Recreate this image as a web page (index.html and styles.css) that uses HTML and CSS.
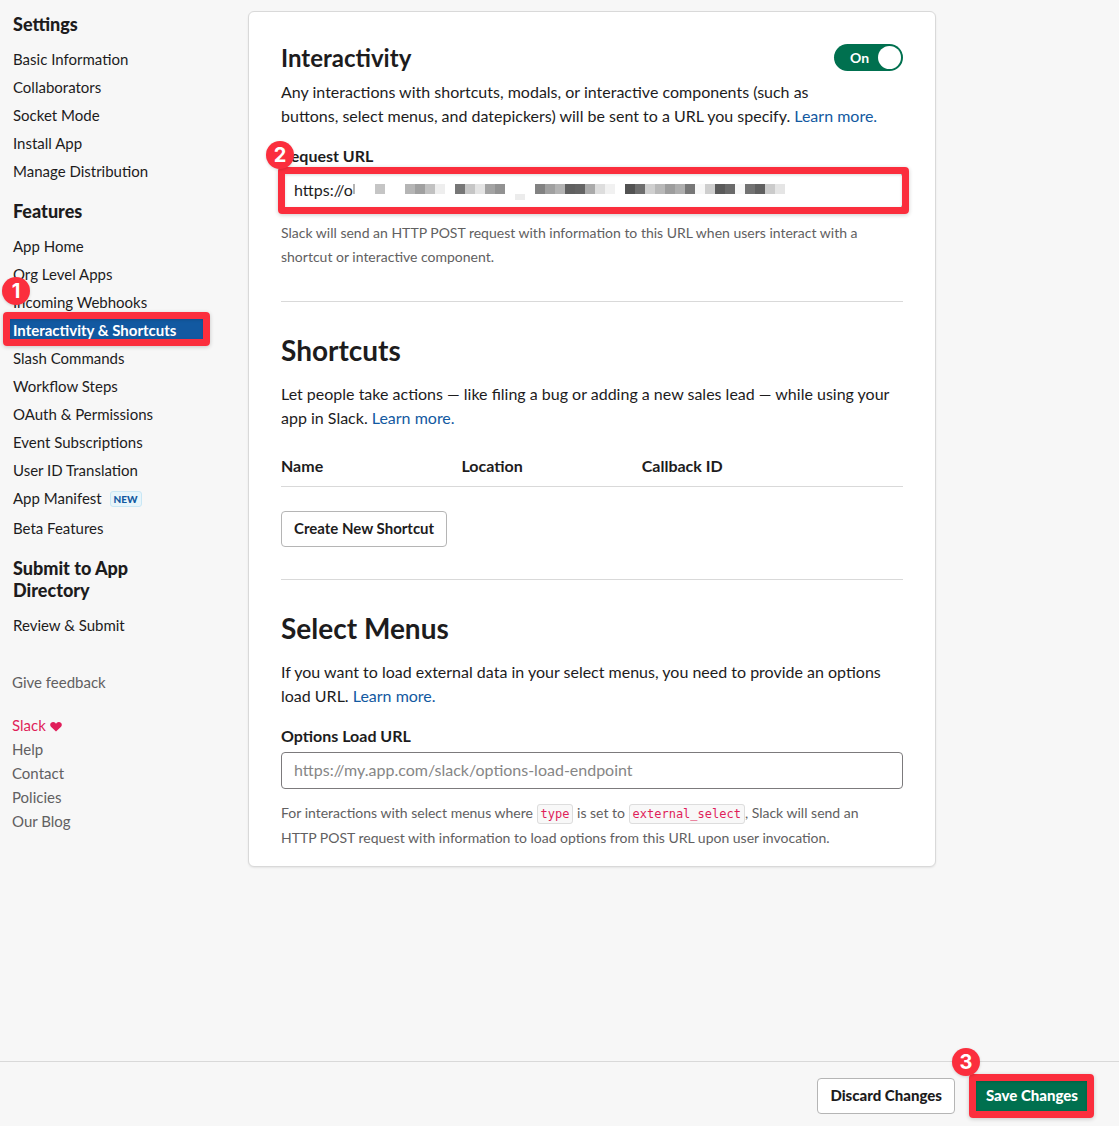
FILE: index.html
```html
<!DOCTYPE html>
<html lang="en">
<head>
  <meta charset="UTF-8">
  <meta name="viewport" content="width=device-width, initial-scale=1.0">
  <title>Interactivity &amp; Shortcuts</title>
  <link rel="stylesheet" href="styles.css">
</head>
<body>
  <div class="page">
    <nav class="sidebar">
      <h4>Settings</h4>
      <ul class="nav-list">
        <li><a href="#">Basic Information</a></li>
        <li><a href="#">Collaborators</a></li>
        <li><a href="#">Socket Mode</a></li>
        <li><a href="#">Install App</a></li>
        <li><a href="#">Manage Distribution</a></li>
      </ul>

      <h4>Features</h4>
      <ul class="nav-list">
        <li><a href="#">App Home</a></li>
        <li><a href="#">Org Level Apps</a></li>
        <li><a href="#">Incoming Webhooks</a></li>
        <li class="callout">
          <a href="#" class="active">Interactivity &amp; Shortcuts</a>
          <span class="frame frame-nav"></span>
          <span class="step step-nav">1</span>
        </li>
        <li><a href="#">Slash Commands</a></li>
        <li><a href="#">Workflow Steps</a></li>
        <li><a href="#">OAuth &amp; Permissions</a></li>
        <li><a href="#">Event Subscriptions</a></li>
        <li><a href="#">User ID Translation</a></li>
        <li class="with-tag"><a href="#">App Manifest <span class="tag">NEW</span></a></li>
        <li><a href="#">Beta Features</a></li>
      </ul>

      <h4>Submit to App Directory</h4>
      <ul class="nav-list">
        <li><a href="#">Review &amp; Submit</a></li>
      </ul>

      <ul class="footer-links feedback">
        <li><a href="#">Give feedback</a></li>
      </ul>
      <ul class="footer-links">
        <li><a href="#" class="slack-love">Slack
          <svg class="heart" viewBox="0 0 12 11" width="12" height="11"><path d="M6 10.500 1.200 6C-.1 4.800-.1 2.900.9 1.900 2 .7 4.200.6 5.200 1.800L6 2.700l.8-.9C7.800.6 10 .7 11.100 1.900c1 1 1 2.900-.3 4.100z" fill="currentColor"/></svg></a></li>
        <li><a href="#">Help</a></li>
        <li><a href="#">Contact</a></li>
        <li><a href="#">Policies</a></li>
        <li><a href="#">Our Blog</a></li>
      </ul>
    </nav>

    <main class="card">
      <section>
        <label class="toggle">
          <input type="checkbox" aria-label="Interactivity" checked>
          <span class="toggle-text">On</span>
          <span class="toggle-knob"></span>
        </label>
        <h2>Interactivity</h2>
        <p>Any interactions with shortcuts, modals, or interactive components (such as buttons, select menus, and datepickers) will be sent to a URL you specify. <a href="#">Learn more.</a></p>

        <label class="field-label" for="request-url">Request URL</label>
        <div class="callout">
          <input type="text" class="field" id="request-url" value="https://o">
          <!-- redacted part of the URL -->
          <svg class="redacted" viewBox="0 0 432 16" width="432" height="16" shape-rendering="crispEdges">
            <rect x="0" width="2" height="10" fill="#b4b4b4"/>
            <rect x="22" width="10" height="10" fill="#c5c5c5"/>
            <rect x="52" width="10" height="10" fill="#b5b5b5"/>
            <rect x="62" width="10" height="10" fill="#a0a0a0"/>
            <rect x="72" width="10" height="10" fill="#c1c1c1"/>
            <rect x="82" width="10" height="10" fill="#eeeeee"/>
            <rect x="102" width="10" height="10" fill="#777777"/>
            <rect x="112" width="10" height="10" fill="#c6c6c6"/>
            <rect x="122" width="10" height="10" fill="#e4e4e4"/>
            <rect x="132" width="10" height="10" fill="#a3a3a3"/>
            <rect x="142" width="10" height="10" fill="#929292"/>
            <rect x="162" y="10" width="10" height="6" fill="#ececec"/>
            <rect x="182" width="10" height="10" fill="#828282"/>
            <rect x="192" width="10" height="10" fill="#a0a0a0"/>
            <rect x="202" width="10" height="10" fill="#b3b3b3"/>
            <rect x="212" width="10" height="10" fill="#606060"/>
            <rect x="222" width="10" height="10" fill="#646464"/>
            <rect x="232" width="10" height="10" fill="#aaaaaa"/>
            <rect x="242" width="10" height="10" fill="#dddddd"/>
            <rect x="252" width="10" height="10" fill="#f1f1f1"/>
            <rect x="272" width="10" height="10" fill="#525252"/>
            <rect x="282" width="10" height="10" fill="#6e6e6e"/>
            <rect x="292" width="10" height="10" fill="#cfcfcf"/>
            <rect x="302" width="10" height="10" fill="#b8b8b8"/>
            <rect x="312" width="10" height="10" fill="#9d9d9d"/>
            <rect x="322" width="10" height="10" fill="#aeaeae"/>
            <rect x="332" width="10" height="10" fill="#777777"/>
            <rect x="342" width="10" height="10" fill="#f7f7f7"/>
            <rect x="352" width="10" height="10" fill="#cecece"/>
            <rect x="362" width="10" height="10" fill="#5a5a5a"/>
            <rect x="372" width="10" height="10" fill="#6a6a6a"/>
            <rect x="382" width="10" height="10" fill="#f7f7f7"/>
            <rect x="392" width="10" height="10" fill="#727272"/>
            <rect x="402" width="10" height="10" fill="#606060"/>
            <rect x="412" width="10" height="10" fill="#cbcbcb"/>
            <rect x="422" width="10" height="10" fill="#e5e5e5"/>
          </svg>
          <span class="frame frame-field"></span>
          <span class="step step-field">2</span>
        </div>
        <p class="hint">Slack will send an HTTP POST request with information to this URL when users interact with a shortcut or interactive component.</p>
      </section>

      <section>
        <h1>Shortcuts</h1>
        <p>Let people take actions — like filing a bug or adding a new sales lead — while using your app in Slack. <a href="#">Learn more.</a></p>
        <table class="shortcuts">
          <thead>
            <tr>
              <th>Name</th>
              <th>Location</th>
              <th class="col-callback">Callback ID</th>
            </tr>
          </thead>
        </table>
        <button type="button" class="btn">Create New Shortcut</button>
      </section>

      <section>
        <h1>Select Menus</h1>
        <p>If you want to load external data in your select menus, you need to provide an options load URL. <a href="#">Learn more.</a></p>
        <label class="field-label" for="options-url">Options Load URL</label>
        <input type="text" class="field" id="options-url" placeholder="https://my.app.com/slack/options-load-endpoint">
        <p class="hint">For interactions with select menus where <code>type</code> is set to <code>external_select</code>, Slack will send an HTTP POST request with information to load options from this URL upon user invocation.</p>
      </section>
    </main>
  </div>

  <footer class="action-bar">
    <button type="button" class="btn">Discard Changes</button>
    <div class="callout">
      <button type="button" class="btn btn-primary">Save Changes</button>
      <span class="frame frame-save"></span>
      <span class="step step-save">3</span>
    </div>
  </footer>
</body>
</html>
```
FILE: styles.css
```css
* {
  box-sizing: border-box;
}

body {
  display: flex;
  flex-direction: column;
  min-height: 100vh;
  margin: 0;
  font-family: Lato, "Liberation Sans", sans-serif;
  font-size: 16px;
  line-height: 24px;
  color: #1d1c1d;
  background-color: #f7f7f7;
}

h1, h2, h4, p, ul {
  margin: 0;
}

ul {
  padding: 0;
  list-style: none;
}

a {
  color: #1259a1;
  text-decoration: none;
}

.page {
  flex: 1;
  display: flex;
  align-items: flex-start;
  gap: 40px;
}

/* Sidebar */
.sidebar {
  flex: 0 0 208px;
  padding-top: 13px;
  font-size: 15px;
}

.sidebar h4 {
  padding: 0 60px 0 13px;
  margin-bottom: 10px;
  font-size: 18px;
  font-weight: 900;
  line-height: 22px;
}

.nav-list {
  margin-bottom: 15px;
}

.nav-list a {
  display: block;
  padding-left: 13px;
  line-height: 28px;
  color: #1d1c1d;
}

.nav-list .active {
  margin: 0 4px;
  padding-left: 9px;
  font-weight: 700;
  color: #fff;
  background-color: #1259a1;
}

.with-tag {
  padding-bottom: 2px;
}

.tag {
  display: inline-block;
  margin-left: 4px;
  padding: 0 3px;
  border: 1px solid #c9e7f5;
  border-radius: 3px;
  font-size: 10px;
  font-weight: 900;
  line-height: 14px;
  vertical-align: 1px;
  color: #1259a1;
  background-color: #e8f5fa;
}

.footer-links {
  padding-left: 12px;
}

.footer-links a {
  color: #616061;
}

.feedback {
  margin: 31px 0 19px;
}

.footer-links .slack-love {
  color: #e01e5a;
}

.heart {
  vertical-align: -1px;
}

/* Content card */
.card {
  flex: 0 1 688px;
  margin: 11px 16px 32px 0;
  padding: 32px 32px 16px;
  border: 1px solid #d9d9d9;
  border-radius: 6px;
  background-color: #fff;
  box-shadow: 0 1px 2px rgba(0, 0, 0, 0.08);
}

.card section + section {
  margin-top: 32px;
  padding-top: 32px;
  border-top: 1px solid #d9d9d9;
}

h1 {
  margin-bottom: 16px;
  font-size: 28px;
  line-height: 32px;
}

h2 {
  margin-bottom: 8px;
  font-size: 24px;
  line-height: 28px;
}

.toggle {
  float: right;
  display: flex;
  align-items: center;
  justify-content: space-between;
  width: 69px;
  height: 27px;
  margin: 0 0 16px 16px;
  padding: 0 2px 0 16px;
  border-radius: 14px;
  font-size: 14px;
  font-weight: 700;
  color: #fff;
  background-color: #00704f;
  cursor: pointer;
}

.toggle input {
  position: absolute;
  opacity: 0;
}

.toggle-knob {
  width: 23px;
  height: 23px;
  border-radius: 50%;
  background-color: #fff;
}

.field-label {
  display: block;
  margin: 16px 0 4px;
  font-weight: 700;
}

.field {
  display: block;
  width: 100%;
  height: 37px;
  padding: 0 12px 2px;
  border: 1px solid #7c7a7c;
  border-radius: 4px;
  font: inherit;
  color: #1d1c1d;
  background-color: #fff;
}

.field::placeholder {
  color: #868686;
}

.hint {
  margin-top: 12px;
  padding-right: 16px;
  font-size: 14px;
  color: #616061;
}

.hint code {
  padding: 2px 3px;
  border: 1px solid #dddddd;
  border-radius: 3px;
  font-family: "DejaVu Sans Mono", monospace;
  font-size: 12px;
  color: #e01e5a;
  background-color: #f8f8f8;
}

.shortcuts {
  width: 100%;
  margin: 24px 0;
  border-collapse: collapse;
  table-layout: fixed;
}

.shortcuts th {
  width: 29%;
  padding: 0 0 8px;
  border-bottom: 1px solid #d9d9d9;
  text-align: left;
}

.shortcuts .col-callback {
  width: 42%;
}

.btn {
  display: block;
  height: 36px;
  padding: 0 12px 2px;
  border: 1px solid #b5b5b5;
  border-radius: 4px;
  font: inherit;
  font-size: 15px;
  font-weight: 700;
  color: #1d1c1d;
  background-color: #fff;
  cursor: pointer;
}

.btn-primary {
  border-color: #00704f;
  color: #fff;
  background-color: #00704f;
}

/* Bottom bar */
.action-bar {
  display: flex;
  justify-content: flex-end;
  gap: 18px;
  padding: 16px 28px 12px;
  border-top: 1px solid #d9d9d9;
}

.action-bar .btn {
  font-weight: 900;
}

/* Numbered walkthrough callouts */
.callout {
  position: relative;
}

.frame {
  position: absolute;
  border: 7px solid #fb2e3d;
  border-radius: 4px;
  box-shadow: 0 1px 4px rgba(0, 0, 0, 0.2), inset 0 1px 3px rgba(0, 0, 0, 0.15);
  pointer-events: none;
}

.frame-nav {
  inset: -4px -2px -2px 3px;
}

.frame-field {
  inset: -5px -6px -5px -3px;
}

.frame-save {
  inset: -4px -3px -4px -4px;
}

.step {
  position: absolute;
  z-index: 1;
  width: 28px;
  height: 28px;
  border-radius: 50%;
  font-family: Inter, sans-serif;
  font-size: 20px;
  font-weight: 700;
  line-height: 28px;
  text-align: center;
  color: #fff;
  background-color: #fb2e3d;
  box-shadow: 0 1px 3px rgba(0, 0, 0, 0.15);
}

.step-nav {
  top: -39px;
  left: 2px;
}

.step-field {
  top: -31px;
  left: -15px;
}

.step-save {
  top: -30px;
  left: -21px;
}

.redacted {
  position: absolute;
  top: 12px;
  left: 72px;
}
```
